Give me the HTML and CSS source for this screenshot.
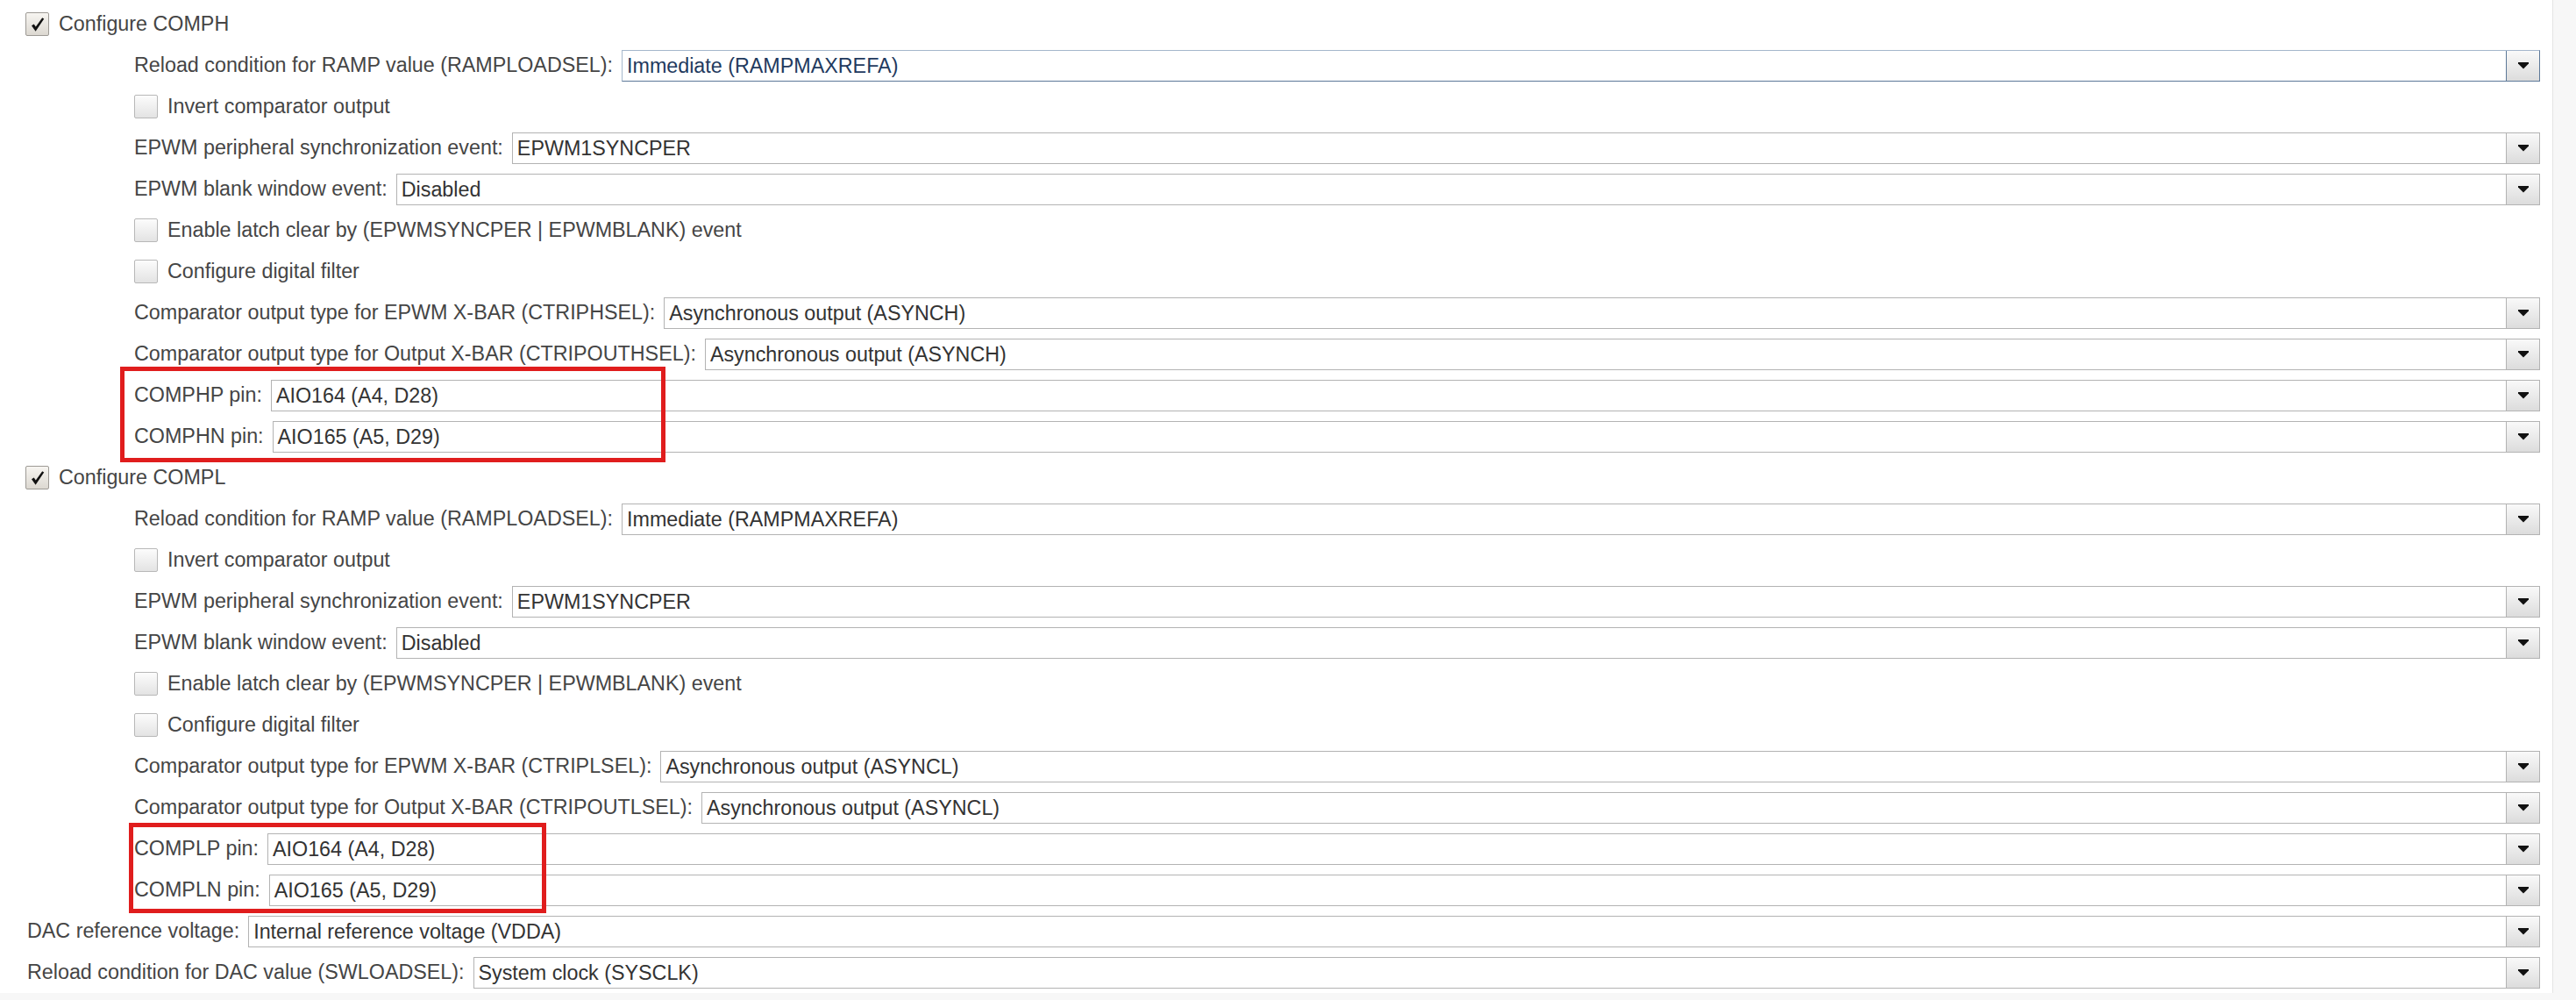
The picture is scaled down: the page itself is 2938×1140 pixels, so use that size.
FILE: index.html
```html
<!DOCTYPE html>
<html lang="en">
<head>
  <meta charset="UTF-8" />
  <title>CMPSS configuration</title>
  <link rel="stylesheet" href="styles.css">
</head>
<body>
  <div class="frame">
    <main class="form">
      <!-- COMPH -->
      <div class="row top">
        <span class="check checked"><svg width="20" height="20" viewBox="0 0 20 20"><path d="M3 11.2 L7.6 17.8 L17.2 3.4 L15.2 2.3 L7.8 12.6 L5.7 9.4 Z" fill="#111"/></svg></span>
        <span class="label">Configure COMPH</span>
      </div>
      <div class="row sub">
        <span class="label">Reload condition for RAMP value (RAMPLOADSEL):</span>
        <div class="select focused"><span class="value">Immediate (RAMPMAXREFA)</span><span class="arrow"><svg width="12" height="8" viewBox="0 0 12 8"><polygon points="0,0 12,0 12,1.6 6,7.6 0,1.6" fill="#111"/></svg></span></div>
      </div>
      <div class="row sub">
        <span class="check"></span>
        <span class="label">Invert comparator output</span>
      </div>
      <div class="row sub">
        <span class="label">EPWM peripheral synchronization event:</span>
        <div class="select"><span class="value">EPWM1SYNCPER</span><span class="arrow"><svg width="12" height="8" viewBox="0 0 12 8"><polygon points="0,0 12,0 12,1.6 6,7.6 0,1.6" fill="#111"/></svg></span></div>
      </div>
      <div class="row sub">
        <span class="label">EPWM blank window event:</span>
        <div class="select"><span class="value">Disabled</span><span class="arrow"><svg width="12" height="8" viewBox="0 0 12 8"><polygon points="0,0 12,0 12,1.6 6,7.6 0,1.6" fill="#111"/></svg></span></div>
      </div>
      <div class="row sub">
        <span class="check"></span>
        <span class="label">Enable latch clear by (EPWMSYNCPER | EPWMBLANK) event</span>
      </div>
      <div class="row sub">
        <span class="check"></span>
        <span class="label">Configure digital filter</span>
      </div>
      <div class="row sub">
        <span class="label">Comparator output type for EPWM X-BAR (CTRIPHSEL):</span>
        <div class="select"><span class="value">Asynchronous output (ASYNCH)</span><span class="arrow"><svg width="12" height="8" viewBox="0 0 12 8"><polygon points="0,0 12,0 12,1.6 6,7.6 0,1.6" fill="#111"/></svg></span></div>
      </div>
      <div class="row sub">
        <span class="label">Comparator output type for Output X-BAR (CTRIPOUTHSEL):</span>
        <div class="select"><span class="value">Asynchronous output (ASYNCH)</span><span class="arrow"><svg width="12" height="8" viewBox="0 0 12 8"><polygon points="0,0 12,0 12,1.6 6,7.6 0,1.6" fill="#111"/></svg></span></div>
      </div>
      <div class="row sub">
        <span class="label">COMPHP pin:</span>
        <div class="select"><span class="value">AIO164 (A4, D28)</span><span class="arrow"><svg width="12" height="8" viewBox="0 0 12 8"><polygon points="0,0 12,0 12,1.6 6,7.6 0,1.6" fill="#111"/></svg></span></div>
      </div>
      <div class="row sub">
        <span class="label">COMPHN pin:</span>
        <div class="select"><span class="value">AIO165 (A5, D29)</span><span class="arrow"><svg width="12" height="8" viewBox="0 0 12 8"><polygon points="0,0 12,0 12,1.6 6,7.6 0,1.6" fill="#111"/></svg></span></div>
      </div>

      <!-- COMPL -->
      <div class="row top">
        <span class="check checked"><svg width="20" height="20" viewBox="0 0 20 20"><path d="M3 11.2 L7.6 17.8 L17.2 3.4 L15.2 2.3 L7.8 12.6 L5.7 9.4 Z" fill="#111"/></svg></span>
        <span class="label">Configure COMPL</span>
      </div>
      <div class="row sub">
        <span class="label">Reload condition for RAMP value (RAMPLOADSEL):</span>
        <div class="select"><span class="value">Immediate (RAMPMAXREFA)</span><span class="arrow"><svg width="12" height="8" viewBox="0 0 12 8"><polygon points="0,0 12,0 12,1.6 6,7.6 0,1.6" fill="#111"/></svg></span></div>
      </div>
      <div class="row sub">
        <span class="check"></span>
        <span class="label">Invert comparator output</span>
      </div>
      <div class="row sub">
        <span class="label">EPWM peripheral synchronization event:</span>
        <div class="select"><span class="value">EPWM1SYNCPER</span><span class="arrow"><svg width="12" height="8" viewBox="0 0 12 8"><polygon points="0,0 12,0 12,1.6 6,7.6 0,1.6" fill="#111"/></svg></span></div>
      </div>
      <div class="row sub">
        <span class="label">EPWM blank window event:</span>
        <div class="select"><span class="value">Disabled</span><span class="arrow"><svg width="12" height="8" viewBox="0 0 12 8"><polygon points="0,0 12,0 12,1.6 6,7.6 0,1.6" fill="#111"/></svg></span></div>
      </div>
      <div class="row sub">
        <span class="check"></span>
        <span class="label">Enable latch clear by (EPWMSYNCPER | EPWMBLANK) event</span>
      </div>
      <div class="row sub">
        <span class="check"></span>
        <span class="label">Configure digital filter</span>
      </div>
      <div class="row sub">
        <span class="label">Comparator output type for EPWM X-BAR (CTRIPLSEL):</span>
        <div class="select"><span class="value">Asynchronous output (ASYNCL)</span><span class="arrow"><svg width="12" height="8" viewBox="0 0 12 8"><polygon points="0,0 12,0 12,1.6 6,7.6 0,1.6" fill="#111"/></svg></span></div>
      </div>
      <div class="row sub">
        <span class="label">Comparator output type for Output X-BAR (CTRIPOUTLSEL):</span>
        <div class="select"><span class="value">Asynchronous output (ASYNCL)</span><span class="arrow"><svg width="12" height="8" viewBox="0 0 12 8"><polygon points="0,0 12,0 12,1.6 6,7.6 0,1.6" fill="#111"/></svg></span></div>
      </div>
      <div class="row sub">
        <span class="label">COMPLP pin:</span>
        <div class="select"><span class="value">AIO164 (A4, D28)</span><span class="arrow"><svg width="12" height="8" viewBox="0 0 12 8"><polygon points="0,0 12,0 12,1.6 6,7.6 0,1.6" fill="#111"/></svg></span></div>
      </div>
      <div class="row sub">
        <span class="label">COMPLN pin:</span>
        <div class="select"><span class="value">AIO165 (A5, D29)</span><span class="arrow"><svg width="12" height="8" viewBox="0 0 12 8"><polygon points="0,0 12,0 12,1.6 6,7.6 0,1.6" fill="#111"/></svg></span></div>
      </div>

      <!-- DAC -->
      <div class="row top plain">
        <span class="label">DAC reference voltage:</span>
        <div class="select"><span class="value">Internal reference voltage (VDDA)</span><span class="arrow"><svg width="12" height="8" viewBox="0 0 12 8"><polygon points="0,0 12,0 12,1.6 6,7.6 0,1.6" fill="#111"/></svg></span></div>
      </div>
      <div class="row top plain">
        <span class="label">Reload condition for DAC value (SWLOADSEL):</span>
        <div class="select"><span class="value">System clock (SYSCLK)</span><span class="arrow"><svg width="12" height="8" viewBox="0 0 12 8"><polygon points="0,0 12,0 12,1.6 6,7.6 0,1.6" fill="#111"/></svg></span></div>
      </div>

      <!-- annotations -->
      <div class="mark mark-h"></div>
      <div class="mark mark-l"></div>
    </main>
    <div class="vscroll"></div>
    <div class="hscroll"></div>
    <div class="corner"></div>
  </div>
</body>
</html>
```

FILE: styles.css
```css
:root {
  --text: #454545;
  --value: #333;
  --border: #b3b3b3;
  --track: #f7f7f7;
  --mark: #e01d1d;
}

* {
  margin: 0;
  padding: 0;
  box-sizing: border-box;
}

body {
  background: #fff;
  color: var(--text);
  font-family: "Liberation Sans", Arial, sans-serif;
  font-size: 23.3px;
  overflow: hidden;
}

.frame {
  width: 2938px;
  height: 1140px;
  display: grid;
  grid-template-columns: 1fr 27px;
  grid-template-rows: 1fr 8px;
}

.form {
  position: relative;
  padding: 4px 14px 0 0;
  display: flex;
  flex-direction: column;
  overflow: hidden;
}

.row {
  height: 47px;
  flex: 0 0 47px;
  display: flex;
  align-items: center;
  gap: 11px;
  white-space: nowrap;
}

.row.top {
  padding-left: 29px;
}

.row.top.plain {
  padding-left: 31px;
  gap: 10px;
}

.row.sub {
  padding-left: 153px;
  gap: 10px;
}

.row.sub .check + .label {
  margin-left: 1px;
}

.label {
  line-height: 1;
}

/* checkboxes */
.check {
  width: 27px;
  height: 27px;
  flex: 0 0 27px;
  border: 1px solid #b8b8b8;
  border-radius: 2px;
  background: linear-gradient(#fcfcfc, #e3e3e3);
  display: flex;
  align-items: center;
  justify-content: center;
}

.check.checked {
  border-color: #9d9a95;
  background: linear-gradient(#f7f5f1, #dcd8d1);
}

/* dropdowns */
.select {
  flex: 1;
  height: 36px;
  display: flex;
  border: 1px solid var(--border);
  background: #fff;
}

.select .value {
  flex: 1;
  padding-left: 5px;
  line-height: 34px;
  color: var(--value);
}

.select .arrow {
  width: 38px;
  flex: 0 0 38px;
  border-left: 1px solid var(--border);
  background: linear-gradient(#f9f9f9, #dcdcdc);
  display: flex;
  align-items: center;
  justify-content: center;
}

.select.focused {
  border-color: #a5b7cc #5c7898 #5c7898 #a5b7cc;
}

.select.focused .value {
  color: #1f3a5e;
}

.select.focused .arrow {
  border-left-color: #5c7898;
}

/* red highlight boxes */
.mark {
  position: absolute;
  border: 5px solid var(--mark);
  pointer-events: none;
}

.mark-h {
  left: 137px;
  top: 418px;
  width: 622px;
  height: 109px;
}

.mark-l {
  left: 147px;
  top: 938px;
  width: 476px;
  height: 103px;
}

/* scroll areas */
.vscroll {
  background: var(--track);
  border-left: 1px solid #e4e4e4;
}

.hscroll,
.corner {
  background: var(--track);
}
```
